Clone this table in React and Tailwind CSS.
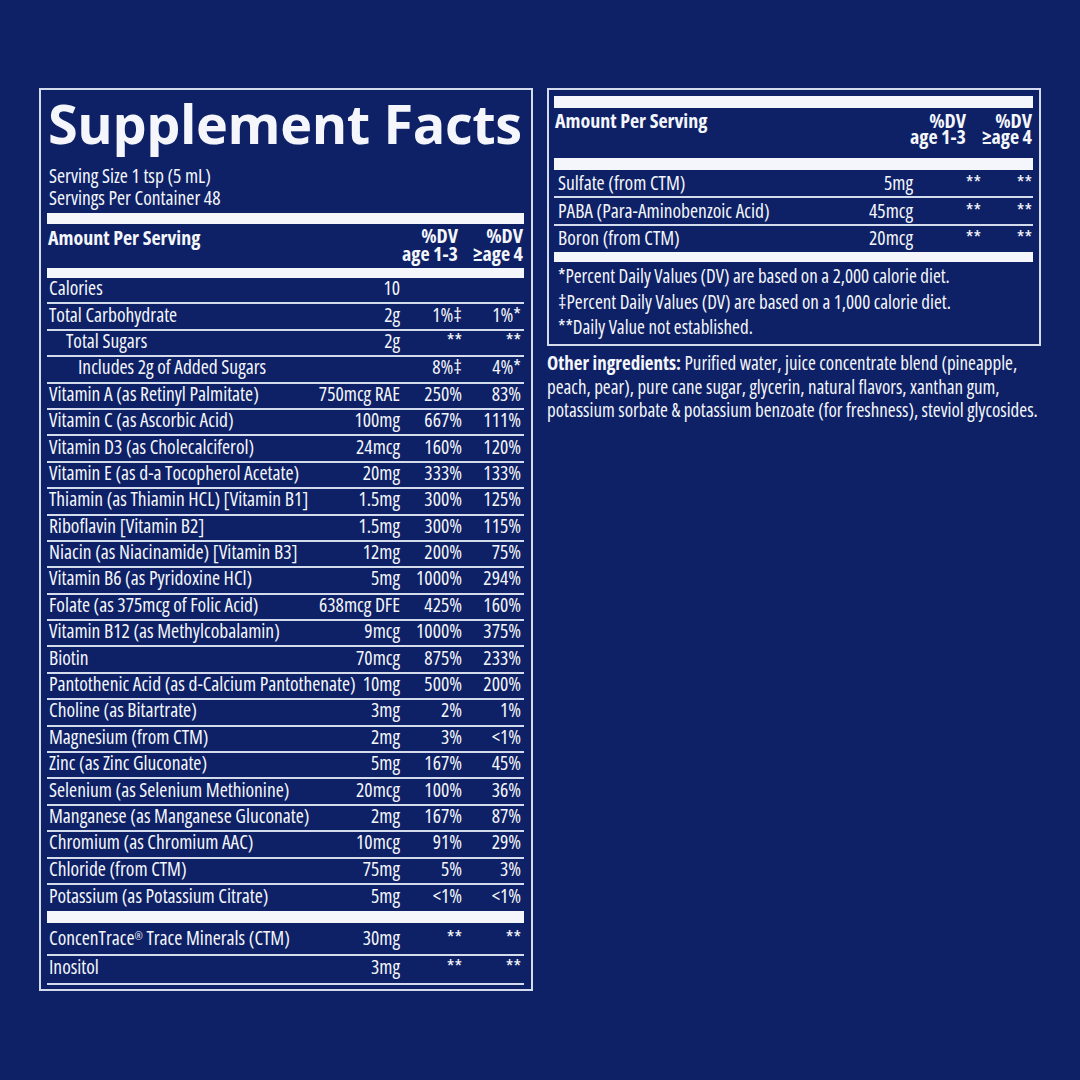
import React from 'react';

const rows = [
  { name: 'Calories', amt: '10', a: '', b: '' },
  { name: 'Total Carbohydrate', amt: '2g', a: '1%‡', b: '1%*' },
  { name: 'Total Sugars', amt: '2g', a: '**', b: '**', indent: 'pl-[19px]' },
  { name: 'Includes 2g of Added Sugars', amt: '', a: '8%‡', b: '4%*', indent: 'pl-[31px]' },
  { name: 'Vitamin A (as Retinyl Palmitate)', amt: '750mcg RAE', a: '250%', b: '83%' },
  { name: 'Vitamin C (as Ascorbic Acid)', amt: '100mg', a: '667%', b: '111%' },
  { name: 'Vitamin D3 (as Cholecalciferol)', amt: '24mcg', a: '160%', b: '120%' },
  { name: 'Vitamin E (as d-a Tocopherol Acetate)', amt: '20mg', a: '333%', b: '133%' },
  { name: 'Thiamin (as Thiamin HCL) [Vitamin B1]', amt: '1.5mg', a: '300%', b: '125%' },
  { name: 'Riboflavin [Vitamin B2]', amt: '1.5mg', a: '300%', b: '115%' },
  { name: 'Niacin (as Niacinamide) [Vitamin B3]', amt: '12mg', a: '200%', b: '75%' },
  { name: 'Vitamin B6 (as Pyridoxine HCl)', amt: '5mg', a: '1000%', b: '294%' },
  { name: 'Folate (as 375mcg of Folic Acid)', amt: '638mcg DFE', a: '425%', b: '160%' },
  { name: 'Vitamin B12 (as Methylcobalamin)', amt: '9mcg', a: '1000%', b: '375%' },
  { name: 'Biotin', amt: '70mcg', a: '875%', b: '233%' },
  { name: 'Pantothenic Acid (as d-Calcium Pantothenate)', amt: '10mg', a: '500%', b: '200%' },
  { name: 'Choline (as Bitartrate)', amt: '3mg', a: '2%', b: '1%' },
  { name: 'Magnesium (from CTM)', amt: '2mg', a: '3%', b: '<1%' },
  { name: 'Zinc (as Zinc Gluconate)', amt: '5mg', a: '167%', b: '45%' },
  { name: 'Selenium (as Selenium Methionine)', amt: '20mcg', a: '100%', b: '36%' },
  { name: 'Manganese (as Manganese Gluconate)', amt: '2mg', a: '167%', b: '87%' },
  { name: 'Chromium (as Chromium AAC)', amt: '10mcg', a: '91%', b: '29%' },
  { name: 'Chloride (from CTM)', amt: '75mg', a: '5%', b: '3%' },
  { name: 'Potassium (as Potassium Citrate)', amt: '5mg', a: '<1%', b: '<1%' },
];

const extra = [
  { name: 'Sulfate (from CTM)', amt: '5mg' },
  { name: 'PABA (Para-Aminobenzoic Acid)', amt: '45mcg' },
  { name: 'Boron (from CTM)', amt: '20mcg' },
];

const line = 'border-b-2 border-[#d3dbec]';
const cols = 'grid grid-cols-[minmax(0,1fr)_auto_62px_59px] content-center leading-[20px] text-[19.5px] pr-[3px] shrink-0';

function Bar({ h = 'h-[11px]' }) {
  return <div className={`${h} shrink-0 bg-[#f4f6fb]`} />;
}

export default function App() {
  return (
    <div className="w-[1080px] h-[1080px] bg-[#0e2166] text-[#f4f6fb] font-['Open_Sans',sans-serif] [font-stretch:75%] flex gap-[14px] pl-[39px] pt-[88px]">
      <div className="w-[494px] h-[903px] border-2 border-[#d3dbec] pl-[6px] pr-[7px] flex flex-col">
        <h1 className="font-bold text-[54px] leading-[54px] [font-stretch:100%] tracking-[-0.4px] pt-[6px] pl-[1px] whitespace-nowrap">
          Supplement Facts
        </h1>
        <div className="text-[19.5px] leading-[21.5px] pl-[2px] pt-[15px] pb-[5px]">
          <div>Serving Size 1 tsp (5 mL)</div>
          <div>Servings Per Container 48</div>
        </div>
        <Bar />
        <div className="h-[44px] shrink-0 flex justify-between font-bold text-[20px] leading-[18px] pr-[1px]">
          <div className="pl-[1px] pt-[5px]">Amount Per Serving</div>
          <div className="flex text-right pt-[3px]">
            <div className="w-[70px]">%DV<br />age 1-3</div>
            <div className="w-[65px]">%DV<br />≥age 4</div>
          </div>
        </div>
        <Bar h="h-[10px]" />
        {rows.map((r, i) => (
          <div
            key={r.name}
            className={`${cols} h-[26.4px] pb-[4px] ${i < rows.length - 1 ? line : ''}`}
          >
            <div className={`whitespace-nowrap ${r.indent || 'pl-[2px]'}`}>{r.name}</div>
            <div className="text-right whitespace-nowrap">{r.amt}</div>
            <div className="text-right">{r.a}</div>
            <div className="text-right">{r.b}</div>
          </div>
        ))}
        <Bar h="h-[12px]" />
        <div className={`${cols} h-[33px] pb-[1px] ${line}`}>
          <div className="pl-[2px] whitespace-nowrap">ConcenTrace<sup className="text-[10px]">®</sup> Trace Minerals (CTM)</div>
          <div className="text-right">30mg</div>
          <div className="text-right">**</div>
          <div className="text-right">**</div>
        </div>
        <div className={`${cols} h-[29px] pb-[5px] ${line}`}>
          <div className="pl-[2px]">Inositol</div>
          <div className="text-right">3mg</div>
          <div className="text-right">**</div>
          <div className="text-right">**</div>
        </div>
      </div>

      <div className="w-[494px] flex flex-col">
        <div className="h-[258px] border-2 border-[#d3dbec] pl-[5px] pr-[6px] pt-[6px] flex flex-col">
          <Bar h="h-[12px]" />
          <div className="h-[50px] shrink-0 flex justify-between font-bold text-[20px] leading-[16px] pr-[1px]">
            <div className="pt-[5px] pl-[1px]">Amount Per Serving</div>
            <div className="flex text-right pt-[5px]">
              <div className="w-[71px]">%DV<br />age 1-3</div>
              <div className="w-[66px]">%DV<br />≥age 4</div>
            </div>
          </div>
          <Bar h="h-[12px]" />
          {extra.map((r, i) => (
            <div
              key={r.name}
              className={`grid grid-cols-[minmax(0,1fr)_auto_68px_51px] content-center leading-[20px] shrink-0 ${i === 2 ? 'h-[26px] pb-[2px]' : `h-[28px] ${line}`} pl-[4px] pr-[1px] text-[19.5px]`}
            >
              <div className="whitespace-nowrap">{r.name}</div>
              <div className="text-right">{r.amt}</div>
              <div className="text-right">**</div>
              <div className="text-right">**</div>
            </div>
          ))}
          <Bar h="h-[10px]" />
          <div className="pl-[4px] pt-[2px] text-[19px] leading-[25.5px] whitespace-nowrap">
            <div>*Percent Daily Values (DV) are based on a 2,000 calorie diet.</div>
            <div>‡Percent Daily Values (DV) are based on a 1,000 calorie diet.</div>
            <div>**Daily Value not established.</div>
          </div>
        </div>
        <p className="pt-[6px] text-[19px] leading-[23.5px] whitespace-nowrap">
          <span className="font-bold">Other ingredients:</span> Purified water, juice concentrate blend (pineapple,<br />
          peach, pear), pure cane sugar, glycerin, natural flavors, xanthan gum,<br />
          potassium sorbate &amp; potassium benzoate (for freshness), steviol glycosides.
        </p>
      </div>
    </div>
  );
}
